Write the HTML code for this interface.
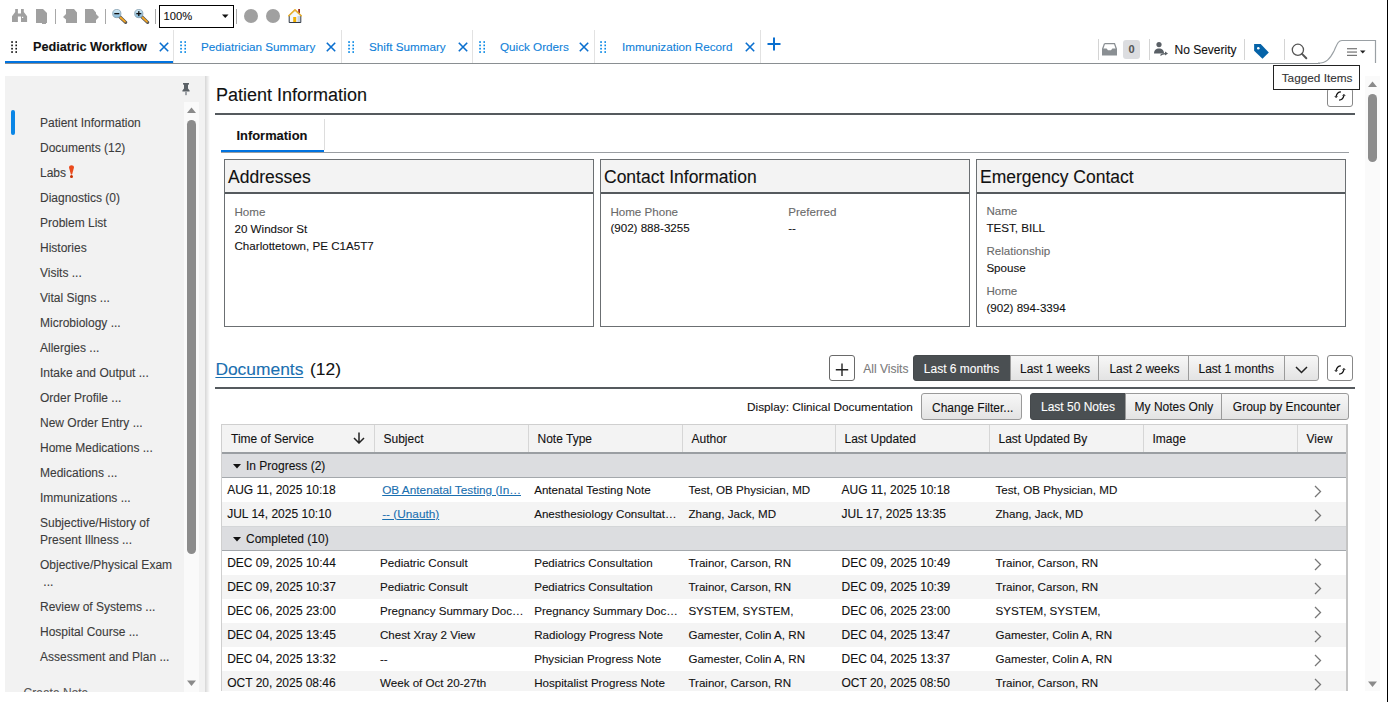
<!DOCTYPE html>
<html><head><meta charset="utf-8"><title>Pediatric Workflow</title>
<style>
html,body{margin:0;padding:0;background:#fff;}
body{width:1388px;height:702px;position:relative;overflow:hidden;font-family:"Liberation Sans",sans-serif;}
.t{position:absolute;white-space:nowrap;-webkit-text-stroke:0.1px currentColor;}
.b{position:absolute;}
</style></head><body>

<div class="b" style="left:1387px;top:0px;width:1px;height:702px;background:#000"></div>
<svg class="b" style="left:12px;top:9px;" width="16" height="14" viewBox="0 0 16 14"><path fill="#a0a0a0" d="M3.2 0H5.9V4.4H9V0H11.8V3L15.1 7.2V13H9V7.6H5.9V13H0V7.2L3.2 3Z"/><rect x="10" y="7.8" width="1.2" height="1.2" fill="#fff"/></svg>
<svg class="b" style="left:36px;top:9px;" width="11" height="16" viewBox="0 0 11 16"><path fill="#a0a0a0" d="M0 0h7l4 4v10H10v1H6v-1H0z"/></svg>
<div class="b" style="left:55px;top:9px;width:1px;height:15px;background:#a8a8a8"></div>
<svg class="b" style="left:63px;top:9px;" width="14" height="14" viewBox="0 0 14 14"><path fill="#a0a0a0" d="M3 0h8l3 3.5V14H3v-3.5L0 8l3-3z"/></svg>
<svg class="b" style="left:85px;top:9px;" width="14" height="14" viewBox="0 0 14 14"><path fill="#a0a0a0" d="M0 0h8l3 3.5v1.5l3 3-3 3V14H0z"/></svg>
<div class="b" style="left:105px;top:9px;width:1px;height:15px;background:#a8a8a8"></div>
<svg class="b" style="left:112px;top:9px;" width="16" height="15" viewBox="0 0 16 15"><defs><linearGradient id="lg112" x1="0" y1="0" x2="0" y2="1"><stop offset="0" stop-color="#d8eef8"/><stop offset="1" stop-color="#7fb6d8"/></linearGradient></defs><line x1="7.5" y1="7.5" x2="13.6" y2="13.3" stroke="#555" stroke-width="3.2" stroke-linecap="round"/><line x1="8.5" y1="8.5" x2="13" y2="12.7" stroke="#f5a623" stroke-width="1.8" stroke-linecap="round"/><circle cx="4.8" cy="4.6" r="4.1" fill="url(#lg112)" stroke="#8aa4b4" stroke-width="0.9"/><rect x="2.3" y="4" width="5" height="1.3" fill="#111"/></svg>
<svg class="b" style="left:134px;top:9px;" width="16" height="15" viewBox="0 0 16 15"><defs><linearGradient id="lg134" x1="0" y1="0" x2="0" y2="1"><stop offset="0" stop-color="#d8eef8"/><stop offset="1" stop-color="#7fb6d8"/></linearGradient></defs><line x1="7.5" y1="7.5" x2="13.6" y2="13.3" stroke="#555" stroke-width="3.2" stroke-linecap="round"/><line x1="8.5" y1="8.5" x2="13" y2="12.7" stroke="#f5a623" stroke-width="1.8" stroke-linecap="round"/><circle cx="4.8" cy="4.6" r="4.1" fill="url(#lg134)" stroke="#8aa4b4" stroke-width="0.9"/><rect x="2.3" y="4" width="5" height="1.3" fill="#111"/><rect x="4.15" y="2.1" width="1.3" height="5" fill="#111"/></svg>
<div class="b" style="left:155px;top:9px;width:1px;height:15px;background:#a8a8a8"></div>
<div class="b" style="left:159px;top:5px;width:75px;height:23px;box-sizing:border-box;border:1px solid #000;background:#fff"></div>
<div class="t " style="left:163.6px;top:10.32px;font-size:11.2px;line-height:13px;color:#111;font-weight:normal;">100%</div>
<svg class="b" style="left:222px;top:14px;" width="7" height="5" viewBox="0 0 7 5"><path d="M0 0.5h6.5L3.25 4z" fill="#111"/></svg>
<div class="b" style="left:236px;top:9px;width:1px;height:15px;background:#a8a8a8"></div>
<div class="b" style="left:244px;top:9px;width:14px;height:14px;border-radius:50%;background:#a0a0a0"></div>
<div class="b" style="left:266px;top:9px;width:14px;height:14px;border-radius:50%;background:#a0a0a0"></div>
<svg class="b" style="left:288px;top:9px;" width="14" height="14" viewBox="0 0 14 14"><rect x="10.2" y="0" width="1.8" height="4.5" fill="#9a2a20"/><path d="M1.2 6.5L7 1 12.8 6.5V13.5H1.2z" fill="#f4f7fb" stroke="#1b2430" stroke-width="0.9"/><path d="M0.3 7.2L7 0.8 13.7 7.2" fill="none" stroke="#e8b030" stroke-width="1.6"/><rect x="5.2" y="8" width="3" height="5" fill="#f0b000"/><rect x="9.5" y="7" width="2.5" height="6" fill="#c8d4e4"/></svg>
<div class="b" style="left:5px;top:63px;width:1315px;height:1px;background:#8a8f92"></div>
<svg class="b" style="left:11px;top:41px;" width="6" height="12" viewBox="0 0 6 12"><rect x="0.20" y="0.20" width="1.7" height="1.7" fill="#1a1a1a"/><rect x="4.40" y="0.20" width="1.7" height="1.7" fill="#1a1a1a"/><rect x="0.20" y="3.53" width="1.7" height="1.7" fill="#1a1a1a"/><rect x="4.40" y="3.53" width="1.7" height="1.7" fill="#1a1a1a"/><rect x="0.20" y="6.86" width="1.7" height="1.7" fill="#1a1a1a"/><rect x="4.40" y="6.86" width="1.7" height="1.7" fill="#1a1a1a"/><rect x="0.20" y="10.19" width="1.7" height="1.7" fill="#1a1a1a"/><rect x="4.40" y="10.19" width="1.7" height="1.7" fill="#1a1a1a"/></svg>
<div class="t " style="left:33px;top:39.50px;font-size:12.7px;line-height:15px;color:#111;font-weight:bold;">Pediatric Workflow</div>
<svg class="b" style="left:159px;top:42px;" width="10" height="10" viewBox="0 0 10 10"><path d="M0.8 0.8L9.2 9.2M9.2 0.8L0.8 9.2" stroke="#0a6fcf" stroke-width="1.6"/></svg>
<div class="b" style="left:5px;top:61px;width:168px;height:2px;background:#0073e0"></div>
<div class="b" style="left:173px;top:30px;width:1px;height:33px;background:#e2e2e2"></div>
<svg class="b" style="left:179.6px;top:41px;" width="6" height="12" viewBox="0 0 6 12"><rect x="0.20" y="0.20" width="1.7" height="1.7" fill="#0a8ae6"/><rect x="4.40" y="0.20" width="1.7" height="1.7" fill="#0a8ae6"/><rect x="0.20" y="3.53" width="1.7" height="1.7" fill="#0a8ae6"/><rect x="4.40" y="3.53" width="1.7" height="1.7" fill="#0a8ae6"/><rect x="0.20" y="6.86" width="1.7" height="1.7" fill="#0a8ae6"/><rect x="4.40" y="6.86" width="1.7" height="1.7" fill="#0a8ae6"/><rect x="0.20" y="10.19" width="1.7" height="1.7" fill="#0a8ae6"/><rect x="4.40" y="10.19" width="1.7" height="1.7" fill="#0a8ae6"/></svg>
<div class="t " style="left:201px;top:40.15px;font-size:11.7px;line-height:14px;color:#0f7fd9;font-weight:normal;">Pediatrician Summary</div>
<svg class="b" style="left:326px;top:42px;" width="10" height="10" viewBox="0 0 10 10"><path d="M0.8 0.8L9.2 9.2M9.2 0.8L0.8 9.2" stroke="#0a6fcf" stroke-width="1.6"/></svg>
<div class="b" style="left:341px;top:30px;width:1px;height:33px;background:#e2e2e2"></div>
<svg class="b" style="left:347.6px;top:41px;" width="6" height="12" viewBox="0 0 6 12"><rect x="0.20" y="0.20" width="1.7" height="1.7" fill="#0a8ae6"/><rect x="4.40" y="0.20" width="1.7" height="1.7" fill="#0a8ae6"/><rect x="0.20" y="3.53" width="1.7" height="1.7" fill="#0a8ae6"/><rect x="4.40" y="3.53" width="1.7" height="1.7" fill="#0a8ae6"/><rect x="0.20" y="6.86" width="1.7" height="1.7" fill="#0a8ae6"/><rect x="4.40" y="6.86" width="1.7" height="1.7" fill="#0a8ae6"/><rect x="0.20" y="10.19" width="1.7" height="1.7" fill="#0a8ae6"/><rect x="4.40" y="10.19" width="1.7" height="1.7" fill="#0a8ae6"/></svg>
<div class="t " style="left:369px;top:40.15px;font-size:11.7px;line-height:14px;color:#0f7fd9;font-weight:normal;">Shift Summary</div>
<svg class="b" style="left:458px;top:42px;" width="10" height="10" viewBox="0 0 10 10"><path d="M0.8 0.8L9.2 9.2M9.2 0.8L0.8 9.2" stroke="#0a6fcf" stroke-width="1.6"/></svg>
<div class="b" style="left:472px;top:30px;width:1px;height:33px;background:#e2e2e2"></div>
<svg class="b" style="left:478.6px;top:41px;" width="6" height="12" viewBox="0 0 6 12"><rect x="0.20" y="0.20" width="1.7" height="1.7" fill="#0a8ae6"/><rect x="4.40" y="0.20" width="1.7" height="1.7" fill="#0a8ae6"/><rect x="0.20" y="3.53" width="1.7" height="1.7" fill="#0a8ae6"/><rect x="4.40" y="3.53" width="1.7" height="1.7" fill="#0a8ae6"/><rect x="0.20" y="6.86" width="1.7" height="1.7" fill="#0a8ae6"/><rect x="4.40" y="6.86" width="1.7" height="1.7" fill="#0a8ae6"/><rect x="0.20" y="10.19" width="1.7" height="1.7" fill="#0a8ae6"/><rect x="4.40" y="10.19" width="1.7" height="1.7" fill="#0a8ae6"/></svg>
<div class="t " style="left:500px;top:40.15px;font-size:11.7px;line-height:14px;color:#0f7fd9;font-weight:normal;">Quick Orders</div>
<svg class="b" style="left:579px;top:42px;" width="10" height="10" viewBox="0 0 10 10"><path d="M0.8 0.8L9.2 9.2M9.2 0.8L0.8 9.2" stroke="#0a6fcf" stroke-width="1.6"/></svg>
<div class="b" style="left:594px;top:30px;width:1px;height:33px;background:#e2e2e2"></div>
<svg class="b" style="left:600.4px;top:41px;" width="6" height="12" viewBox="0 0 6 12"><rect x="0.20" y="0.20" width="1.7" height="1.7" fill="#0a8ae6"/><rect x="4.40" y="0.20" width="1.7" height="1.7" fill="#0a8ae6"/><rect x="0.20" y="3.53" width="1.7" height="1.7" fill="#0a8ae6"/><rect x="4.40" y="3.53" width="1.7" height="1.7" fill="#0a8ae6"/><rect x="0.20" y="6.86" width="1.7" height="1.7" fill="#0a8ae6"/><rect x="4.40" y="6.86" width="1.7" height="1.7" fill="#0a8ae6"/><rect x="0.20" y="10.19" width="1.7" height="1.7" fill="#0a8ae6"/><rect x="4.40" y="10.19" width="1.7" height="1.7" fill="#0a8ae6"/></svg>
<div class="t " style="left:622px;top:40.15px;font-size:11.7px;line-height:14px;color:#0f7fd9;font-weight:normal;">Immunization Record</div>
<svg class="b" style="left:745px;top:42px;" width="10" height="10" viewBox="0 0 10 10"><path d="M0.8 0.8L9.2 9.2M9.2 0.8L0.8 9.2" stroke="#0a6fcf" stroke-width="1.6"/></svg>
<div class="b" style="left:760px;top:30px;width:1px;height:33px;background:#e2e2e2"></div>
<svg class="b" style="left:767px;top:37px;" width="14" height="14" viewBox="0 0 14 14"><path d="M7 0.5V13.5M0.5 7H13.5" stroke="#0a6fcf" stroke-width="2"/></svg>
<div class="b" style="left:1098px;top:39px;width:1px;height:21px;background:#d4d4d4"></div>
<svg class="b" style="left:1102px;top:43px;" width="15" height="13" viewBox="0 0 15 13"><path d="M2.5 0.6h10L14.4 6" fill="none" stroke="#8a8f93" stroke-width="1.3"/><path d="M2.5 0.6L0.6 6" fill="none" stroke="#8a8f93" stroke-width="1.3"/><path d="M0 5.6h4.6l1.4 1.6h3l1.4-1.6H15V12.4H0z" fill="#8a8f93"/></svg>
<div class="b" style="left:1123px;top:40px;width:17px;height:19px;background:#dcdde0;border-radius:3px"></div>
<div class="t " style="left:1128.5px;top:43.19px;font-size:11px;line-height:13px;color:#555;font-weight:bold;">0</div>
<div class="b" style="left:1149px;top:39px;width:1px;height:21px;background:#d4d4d4"></div>
<svg class="b" style="left:1153px;top:42px;" width="16" height="15" viewBox="0 0 16 15"><circle cx="6" cy="2.6" r="2.6" fill="#5a6066"/><path d="M1 11.6C1 8 3 6.4 6 6.4s5 1.6 5 5.2z" fill="#5a6066"/><path d="M7.5 13.6c1-1.8 2.5-2 5-2" fill="none" stroke="#5a6066" stroke-width="1.1"/><path d="M12 9.6l3 2-3 2z" fill="#5a6066"/></svg>
<div class="t " style="left:1174.5px;top:42.64px;font-size:12px;line-height:14px;color:#111;font-weight:normal;">No Severity</div>
<div class="b" style="left:1244px;top:39px;width:1px;height:21px;background:#d4d4d4"></div>
<svg class="b" style="left:1253px;top:43px;" width="17" height="17" viewBox="0 0 17 17"><path d="M1.1 1.1h6.6l8.1 8.3-6.3 6.4-8.4-8.1z" fill="#0563a8"/><circle cx="5.3" cy="5.2" r="1.3" fill="#fff"/></svg>
<div class="b" style="left:1284px;top:39px;width:1px;height:21px;background:#d4d4d4"></div>
<svg class="b" style="left:1290px;top:42px;" width="18" height="18" viewBox="0 0 18 18"><circle cx="7.9" cy="7.8" r="5.6" fill="none" stroke="#555" stroke-width="1.3"/><path d="M12 11.9L16.3 16.2" stroke="#555" stroke-width="2" stroke-linecap="round"/></svg>
<svg class="b" style="left:1318px;top:39px;" width="60" height="26" viewBox="0 0 60 26"><path d="M0 24.2C8 24.2 12 20 16 12 19 5.5 20 1.5 24 1.5H57.5V24" fill="none" stroke="#9aa0a4" stroke-width="1.2"/></svg>
<svg class="b" style="left:1346px;top:47px;" width="22" height="10" viewBox="0 0 22 10"><rect x="1" y="1.2" width="10" height="1.1" fill="#666"/><rect x="1" y="4.5" width="10" height="1.1" fill="#666"/><rect x="1" y="7.8" width="10" height="1.1" fill="#666"/><path d="M14 3.6h5.5l-2.75 2.8z" fill="#222"/></svg>
<div class="b" style="left:5px;top:76px;width:200px;height:616px;background:#f2f2f2"></div>
<div class="b" style="left:205px;top:76px;width:5px;height:616px;background:linear-gradient(to right,#d6d6d6,#eeeeee 60%,#fff)"></div>
<svg class="b" style="left:182px;top:83px;" width="8" height="13" viewBox="0 0 8 13"><path d="M1 0h6v1.2L6 2v3.6l1.6 1.8V8.6H0.4V7.4L2 5.6V2L1 1.2z" fill="#5b6166"/><rect x="3.2" y="8.6" width="1.6" height="3.6" fill="#8a9096"/></svg>
<div class="b" style="left:184px;top:102px;width:15px;height:590px;background:#fafafa"></div>
<svg class="b" style="left:187px;top:107px;" width="9" height="6" viewBox="0 0 9 6"><path d="M0 6L4.5 0.5 9 6z" fill="#8a8a8a"/></svg>
<div class="b" style="left:187px;top:120px;width:9px;height:434px;background:#8c8c8c;border-radius:4.5px"></div>
<svg class="b" style="left:187px;top:680px;" width="9" height="6" viewBox="0 0 9 6"><path d="M0 0.5h9L4.5 6z" fill="#8a8a8a"/></svg>
<div class="b" style="left:11px;top:110px;width:4px;height:25px;background:#0b86e6;border-radius:2px"></div>
<div class="t " style="left:40px;top:115.84px;font-size:12px;line-height:14px;color:#3c3c3c;font-weight:normal;">Patient Information</div>
<div class="t " style="left:40px;top:140.84px;font-size:12px;line-height:14px;color:#3c3c3c;font-weight:normal;">Documents (12)</div>
<div class="t " style="left:40px;top:165.84px;font-size:12px;line-height:14px;color:#3c3c3c;font-weight:normal;">Labs</div>
<div class="t " style="left:40px;top:190.84px;font-size:12px;line-height:14px;color:#3c3c3c;font-weight:normal;">Diagnostics (0)</div>
<div class="t " style="left:40px;top:215.84px;font-size:12px;line-height:14px;color:#3c3c3c;font-weight:normal;">Problem List</div>
<div class="t " style="left:40px;top:240.84px;font-size:12px;line-height:14px;color:#3c3c3c;font-weight:normal;">Histories</div>
<div class="t " style="left:40px;top:265.84px;font-size:12px;line-height:14px;color:#3c3c3c;font-weight:normal;">Visits ...</div>
<div class="t " style="left:40px;top:290.84px;font-size:12px;line-height:14px;color:#3c3c3c;font-weight:normal;">Vital Signs ...</div>
<div class="t " style="left:40px;top:315.84px;font-size:12px;line-height:14px;color:#3c3c3c;font-weight:normal;">Microbiology ...</div>
<div class="t " style="left:40px;top:340.84px;font-size:12px;line-height:14px;color:#3c3c3c;font-weight:normal;">Allergies ...</div>
<div class="t " style="left:40px;top:365.84px;font-size:12px;line-height:14px;color:#3c3c3c;font-weight:normal;">Intake and Output ...</div>
<div class="t " style="left:40px;top:390.84px;font-size:12px;line-height:14px;color:#3c3c3c;font-weight:normal;">Order Profile ...</div>
<div class="t " style="left:40px;top:415.84px;font-size:12px;line-height:14px;color:#3c3c3c;font-weight:normal;">New Order Entry ...</div>
<div class="t " style="left:40px;top:440.84px;font-size:12px;line-height:14px;color:#3c3c3c;font-weight:normal;">Home Medications ...</div>
<div class="t " style="left:40px;top:465.84px;font-size:12px;line-height:14px;color:#3c3c3c;font-weight:normal;">Medications ...</div>
<div class="t " style="left:40px;top:490.84px;font-size:12px;line-height:14px;color:#3c3c3c;font-weight:normal;">Immunizations ...</div>
<div class="t " style="left:40px;top:515.84px;font-size:12px;line-height:14px;color:#3c3c3c;font-weight:normal;">Subjective/History of</div>
<div class="t " style="left:40px;top:532.84px;font-size:12px;line-height:14px;color:#3c3c3c;font-weight:normal;">Present Illness ...</div>
<div class="t " style="left:40px;top:557.84px;font-size:12px;line-height:14px;color:#3c3c3c;font-weight:normal;">Objective/Physical Exam</div>
<div class="t " style="left:40px;top:574.84px;font-size:12px;line-height:14px;color:#3c3c3c;font-weight:normal;">&nbsp;...</div>
<div class="t " style="left:40px;top:599.84px;font-size:12px;line-height:14px;color:#3c3c3c;font-weight:normal;">Review of Systems ...</div>
<div class="t " style="left:40px;top:624.84px;font-size:12px;line-height:14px;color:#3c3c3c;font-weight:normal;">Hospital Course ...</div>
<div class="t " style="left:40px;top:649.84px;font-size:12px;line-height:14px;color:#3c3c3c;font-weight:normal;">Assessment and Plan ...</div>
<svg class="b" style="left:68px;top:165px;" width="7" height="14" viewBox="0 0 7 14"><path d="M1 2.4C1 -0.4 6 -0.4 6 2.4L4.1 9.6H2.9z" fill="#ea4a1c"/><circle cx="3.5" cy="11.6" r="1.5" fill="#c83000"/></svg>
<div class="b" style="left:5px;top:676px;width:179px;height:16px;overflow:hidden">
<div class="t " style="left:18.6px;top:9.84px;font-size:12px;line-height:14px;color:#555;font-weight:normal;">Create Note</div>
</div>
<div class="t " style="left:216px;top:83.76px;font-size:18px;line-height:22px;color:#111;font-weight:normal;">Patient Information</div>
<div class="b" style="left:1327px;top:88px;width:26px;height:19px;box-sizing:border-box;border:1px solid #888;border-radius:3px;background:#fff"></div>
<div class="b" style="left:215px;top:113px;width:1140px;height:2px;background:#555a5e"></div>
<div class="t " style="left:236.5px;top:128.23px;font-size:12.9px;line-height:15px;color:#111;font-weight:bold;">Information</div>
<div class="b" style="left:221px;top:150px;width:103px;height:2px;background:#0073e0"></div>
<div class="b" style="left:324px;top:119px;width:1px;height:31px;background:#dddddd"></div>
<div class="b" style="left:221px;top:152px;width:1128px;height:1px;background:#9a9ea2"></div>
<div class="b" style="left:224px;top:159px;width:370px;height:168px;box-sizing:border-box;border:1px solid #6b6f72;background:#fff"></div>
<div class="b" style="left:225px;top:160px;width:368px;height:32px;background:#f3f3f3"></div>
<div class="b" style="left:225px;top:192px;width:368px;height:2px;background:#555a5e"></div>
<div class="t " style="left:228px;top:166.74px;font-size:17.5px;line-height:21px;color:#111;font-weight:normal;">Addresses</div>
<div class="b" style="left:600px;top:159px;width:370px;height:168px;box-sizing:border-box;border:1px solid #6b6f72;background:#fff"></div>
<div class="b" style="left:601px;top:160px;width:368px;height:32px;background:#f3f3f3"></div>
<div class="b" style="left:601px;top:192px;width:368px;height:2px;background:#555a5e"></div>
<div class="t " style="left:604px;top:166.74px;font-size:17.5px;line-height:21px;color:#111;font-weight:normal;">Contact Information</div>
<div class="b" style="left:976px;top:159px;width:370px;height:168px;box-sizing:border-box;border:1px solid #6b6f72;background:#fff"></div>
<div class="b" style="left:977px;top:160px;width:368px;height:32px;background:#f3f3f3"></div>
<div class="b" style="left:977px;top:192px;width:368px;height:2px;background:#555a5e"></div>
<div class="t " style="left:980px;top:166.74px;font-size:17.5px;line-height:21px;color:#111;font-weight:normal;">Emergency Contact</div>
<div class="t " style="left:234.5px;top:204.78px;font-size:11.6px;line-height:14px;color:#6a6a6a;font-weight:normal;">Home</div>
<div class="t " style="left:234.5px;top:221.78px;font-size:11.6px;line-height:14px;color:#111;font-weight:normal;">20 Windsor St</div>
<div class="t " style="left:234.5px;top:238.58px;font-size:11.6px;line-height:14px;color:#111;font-weight:normal;">Charlottetown, PE C1A5T7</div>
<div class="t " style="left:610.4px;top:204.68px;font-size:11.6px;line-height:14px;color:#6a6a6a;font-weight:normal;">Home Phone</div>
<div class="t " style="left:610.4px;top:221.28px;font-size:11.6px;line-height:14px;color:#111;font-weight:normal;">(902) 888-3255</div>
<div class="t " style="left:788.2px;top:204.68px;font-size:11.6px;line-height:14px;color:#6a6a6a;font-weight:normal;">Preferred</div>
<div class="t " style="left:788.2px;top:221.28px;font-size:11.6px;line-height:14px;color:#111;font-weight:normal;">--</div>
<div class="t " style="left:986.4px;top:204.38px;font-size:11.6px;line-height:14px;color:#6a6a6a;font-weight:normal;">Name</div>
<div class="t " style="left:986.4px;top:221.38px;font-size:11.6px;line-height:14px;color:#111;font-weight:normal;">TEST, BILL</div>
<div class="t " style="left:986.4px;top:244.28px;font-size:11.6px;line-height:14px;color:#6a6a6a;font-weight:normal;">Relationship</div>
<div class="t " style="left:986.4px;top:260.98px;font-size:11.6px;line-height:14px;color:#111;font-weight:normal;">Spouse</div>
<div class="t " style="left:986.4px;top:284.48px;font-size:11.6px;line-height:14px;color:#6a6a6a;font-weight:normal;">Home</div>
<div class="t " style="left:986.4px;top:300.78px;font-size:11.6px;line-height:14px;color:#111;font-weight:normal;">(902) 894-3394</div>
<div class="t " style="left:215.4px;top:359.17px;font-size:17.4px;line-height:21px;color:#1a6fb0;font-weight:normal;text-decoration:underline;text-underline-offset:2px;text-decoration-thickness:1px">Documents</div>
<div class="t " style="left:310px;top:359.17px;font-size:17.4px;line-height:21px;color:#111;font-weight:normal;">(12)</div>
<div class="b" style="left:215px;top:387px;width:1140px;height:2px;background:#555a5e"></div>
<div class="b" style="left:829px;top:355px;width:26px;height:26px;box-sizing:border-box;border:1px solid #6a6a6a;border-radius:3px;background:#fff"></div>
<svg class="b" style="left:835px;top:362px;" width="14" height="14" viewBox="0 0 14 14"><path d="M7 1.5V14M0.8 7.8H13.2" stroke="#222" stroke-width="1.4"/></svg>
<div class="t " style="left:863.3px;top:362.34px;font-size:12px;line-height:14px;color:#7a7a7a;font-weight:normal;">All Visits</div>
<div class="b" style="left:913px;top:355px;width:98px;height:26px;box-sizing:border-box;background:#4a4f52;border:1px solid #45494c;border-radius:3px 0 0 3px"></div>
<div class="t " style="left:923.8px;top:362.34px;font-size:12px;line-height:14px;color:#fff;font-weight:normal;">Last 6 months</div>
<div class="b" style="left:1010px;top:355px;width:89px;height:26px;box-sizing:border-box;border:1px solid #9a9a9a;background:linear-gradient(#f7f7f7,#e3e3e3);"></div>
<div class="t " style="left:1020px;top:362.34px;font-size:12px;line-height:14px;color:#111;font-weight:normal;">Last 1 weeks</div>
<div class="b" style="left:1098px;top:355px;width:91px;height:26px;box-sizing:border-box;border:1px solid #9a9a9a;background:linear-gradient(#f7f7f7,#e3e3e3);"></div>
<div class="t " style="left:1109.4px;top:362.34px;font-size:12px;line-height:14px;color:#111;font-weight:normal;">Last 2 weeks</div>
<div class="b" style="left:1188px;top:355px;width:97px;height:26px;box-sizing:border-box;border:1px solid #9a9a9a;background:linear-gradient(#f7f7f7,#e3e3e3);"></div>
<div class="t " style="left:1198.5px;top:362.34px;font-size:12px;line-height:14px;color:#111;font-weight:normal;">Last 1 months</div>
<div class="b" style="left:1284px;top:355px;width:35px;height:26px;box-sizing:border-box;border:1px solid #9a9a9a;background:linear-gradient(#f7f7f7,#e3e3e3);border-radius:0 3px 3px 0"></div>
<svg class="b" style="left:1295px;top:366px;" width="13" height="8" viewBox="0 0 13 8"><path d="M1 1L6.5 6.5 12 1" fill="none" stroke="#222" stroke-width="1.5"/></svg>
<div class="b" style="left:1327px;top:355px;width:26px;height:26px;box-sizing:border-box;border:1px solid #888;border-radius:3px;background:#fff"></div>
<svg class="b" style="left:1333px;top:363px;" width="14" height="14" viewBox="0 0 14 14"><path d="M7.9 2.9C5.6 3 3.8 4.6 3.2 7.1" fill="none" stroke="#111" stroke-width="1.3"/><path d="M6.1 11.1C8.4 11 10.2 9.4 10.8 6.9" fill="none" stroke="#111" stroke-width="1.3"/><path d="M1.2 7.2L5 7.2 3.1 8.9z" fill="#111"/><path d="M9 6.8L12.8 6.8 10.9 5.1z" fill="#111"/></svg>
<svg class="b" style="left:1333px;top:89px;" width="14" height="14" viewBox="0 0 14 14"><path d="M7.9 2.9C5.6 3 3.8 4.6 3.2 7.1" fill="none" stroke="#111" stroke-width="1.3"/><path d="M6.1 11.1C8.4 11 10.2 9.4 10.8 6.9" fill="none" stroke="#111" stroke-width="1.3"/><path d="M1.2 7.2L5 7.2 3.1 8.9z" fill="#111"/><path d="M9 6.8L12.8 6.8 10.9 5.1z" fill="#111"/></svg>
<div class="t " style="left:747px;top:399.91px;font-size:11.8px;line-height:14px;color:#111;font-weight:normal;">Display: Clinical Documentation</div>
<div class="b" style="left:921px;top:393px;width:101px;height:27px;box-sizing:border-box;border:1px solid #9a9a9a;background:linear-gradient(#f7f7f7,#e3e3e3);border-radius:3px"></div>
<div class="t " style="left:932px;top:400.84px;font-size:12px;line-height:14px;color:#111;font-weight:normal;">Change Filter...</div>
<div class="b" style="left:1030px;top:393px;width:96px;height:27px;box-sizing:border-box;background:#4a4f52;border:1px solid #45494c;border-radius:3px 0 0 3px"></div>
<div class="t " style="left:1041px;top:400.34px;font-size:12px;line-height:14px;color:#fff;font-weight:normal;">Last 50 Notes</div>
<div class="b" style="left:1125px;top:393px;width:97px;height:27px;box-sizing:border-box;border:1px solid #9a9a9a;background:linear-gradient(#f7f7f7,#e3e3e3);"></div>
<div class="t " style="left:1134.6px;top:400.34px;font-size:12px;line-height:14px;color:#111;font-weight:normal;">My Notes Only</div>
<div class="b" style="left:1221px;top:393px;width:128px;height:27px;box-sizing:border-box;border:1px solid #9a9a9a;background:linear-gradient(#f7f7f7,#e3e3e3);border-radius:0 3px 3px 0"></div>
<div class="t " style="left:1232.8px;top:400.34px;font-size:12px;line-height:14px;color:#111;font-weight:normal;">Group by Encounter</div>
<div class="b" style="left:221px;top:424px;width:1127px;height:1px;background:#cfcfcf"></div>
<div class="b" style="left:221px;top:424px;width:1px;height:268px;background:#cfcfcf"></div>
<div class="b" style="left:1346px;top:424px;width:2px;height:268px;background:#c4c4c4"></div>
<div class="b" style="left:222px;top:425px;width:1124px;height:27px;background:#f3f3f3"></div>
<div class="b" style="left:222px;top:452px;width:1124px;height:2px;background:#9a9ea2"></div>
<div class="b" style="left:374px;top:425px;width:1px;height:27px;background:#d6d6d6"></div>
<div class="b" style="left:528px;top:425px;width:1px;height:27px;background:#d6d6d6"></div>
<div class="b" style="left:682px;top:425px;width:1px;height:27px;background:#d6d6d6"></div>
<div class="b" style="left:835px;top:425px;width:1px;height:27px;background:#d6d6d6"></div>
<div class="b" style="left:989px;top:425px;width:1px;height:27px;background:#d6d6d6"></div>
<div class="b" style="left:1143px;top:425px;width:1px;height:27px;background:#d6d6d6"></div>
<div class="b" style="left:1297px;top:425px;width:1px;height:27px;background:#d6d6d6"></div>
<div class="t " style="left:231px;top:431.84px;font-size:12px;line-height:14px;color:#111;font-weight:normal;">Time of Service</div>
<div class="t " style="left:383.5px;top:431.84px;font-size:12px;line-height:14px;color:#111;font-weight:normal;">Subject</div>
<div class="t " style="left:537.5px;top:431.84px;font-size:12px;line-height:14px;color:#111;font-weight:normal;">Note Type</div>
<div class="t " style="left:691.5px;top:431.84px;font-size:12px;line-height:14px;color:#111;font-weight:normal;">Author</div>
<div class="t " style="left:844.5px;top:431.84px;font-size:12px;line-height:14px;color:#111;font-weight:normal;">Last Updated</div>
<div class="t " style="left:998.5px;top:431.84px;font-size:12px;line-height:14px;color:#111;font-weight:normal;">Last Updated By</div>
<div class="t " style="left:1152.5px;top:431.84px;font-size:12px;line-height:14px;color:#111;font-weight:normal;">Image</div>
<div class="t " style="left:1306.5px;top:431.84px;font-size:12px;line-height:14px;color:#111;font-weight:normal;">View</div>
<svg class="b" style="left:353px;top:432px;" width="12" height="12" viewBox="0 0 12 12"><path d="M6 0.5V11M1 6L6 11 11 6" fill="none" stroke="#222" stroke-width="1.5"/></svg>
<div class="b" style="left:222px;top:454px;width:1124px;height:23px;background:#dcdde0"></div>
<div class="b" style="left:222px;top:477px;width:1124px;height:1px;background:#a4a8ac"></div>
<svg class="b" style="left:233px;top:464px;" width="8" height="5" viewBox="0 0 8 5"><path d="M0 0h8L4 4.5z" fill="#111"/></svg>
<div class="t " style="left:246px;top:458.54px;font-size:12px;line-height:14px;color:#111;font-weight:normal;">In Progress (2)</div>
<div class="b" style="left:222px;top:478px;width:1124px;height:24px;background:#fff"></div>
<div class="t " style="left:227.2px;top:482.64px;font-size:12px;line-height:14px;color:#111;font-weight:normal;">AUG 11, 2025 10:18</div>
<div class="t " style="left:382.2px;top:482.71px;font-size:11.8px;line-height:14px;color:#1a6fb0;font-weight:normal;text-decoration:underline;text-decoration-thickness:1px">OB Antenatal Testing (In…</div>
<div class="t " style="left:534.2px;top:482.78px;font-size:11.6px;line-height:14px;color:#111;font-weight:normal;">Antenatal Testing Note</div>
<div class="t " style="left:688.4px;top:482.78px;font-size:11.6px;line-height:14px;color:#111;font-weight:normal;">Test, OB Physician, MD</div>
<div class="t " style="left:841.5px;top:482.64px;font-size:12px;line-height:14px;color:#111;font-weight:normal;">AUG 11, 2025 10:18</div>
<div class="t " style="left:995.5px;top:482.78px;font-size:11.6px;line-height:14px;color:#111;font-weight:normal;">Test, OB Physician, MD</div>
<svg class="b" style="left:1314px;top:485px;" width="8" height="13" viewBox="0 0 8 13"><path d="M1 1L6.5 6.5 1 12" fill="none" stroke="#777" stroke-width="1.3"/></svg>
<div class="b" style="left:222px;top:502px;width:1124px;height:24px;background:#f4f4f4"></div>
<div class="t " style="left:227.2px;top:506.64px;font-size:12px;line-height:14px;color:#111;font-weight:normal;">JUL 14, 2025 10:10</div>
<div class="t " style="left:382.2px;top:506.71px;font-size:11.8px;line-height:14px;color:#1a6fb0;font-weight:normal;text-decoration:underline;text-decoration-thickness:1px">-- (Unauth)</div>
<div class="t " style="left:534.2px;top:506.78px;font-size:11.6px;line-height:14px;color:#111;font-weight:normal;">Anesthesiology Consultat…</div>
<div class="t " style="left:688.4px;top:506.78px;font-size:11.6px;line-height:14px;color:#111;font-weight:normal;">Zhang, Jack, MD</div>
<div class="t " style="left:841.5px;top:506.64px;font-size:12px;line-height:14px;color:#111;font-weight:normal;">JUL 17, 2025 13:35</div>
<div class="t " style="left:995.5px;top:506.78px;font-size:11.6px;line-height:14px;color:#111;font-weight:normal;">Zhang, Jack, MD</div>
<svg class="b" style="left:1314px;top:509px;" width="8" height="13" viewBox="0 0 8 13"><path d="M1 1L6.5 6.5 1 12" fill="none" stroke="#777" stroke-width="1.3"/></svg>
<div class="b" style="left:222px;top:526px;width:1124px;height:1px;background:#d4d6d8"></div>
<div class="b" style="left:222px;top:527px;width:1124px;height:23px;background:#dcdde0"></div>
<div class="b" style="left:222px;top:550px;width:1124px;height:1px;background:#a4a8ac"></div>
<svg class="b" style="left:233px;top:537px;" width="8" height="5" viewBox="0 0 8 5"><path d="M0 0h8L4 4.5z" fill="#111"/></svg>
<div class="t " style="left:246px;top:531.54px;font-size:12px;line-height:14px;color:#111;font-weight:normal;">Completed (10)</div>
<div class="b" style="left:222px;top:551px;width:1124px;height:24px;background:#fff"></div>
<div class="t " style="left:227.2px;top:555.64px;font-size:12px;line-height:14px;color:#111;font-weight:normal;">DEC 09, 2025 10:44</div>
<div class="t " style="left:380px;top:555.78px;font-size:11.6px;line-height:14px;color:#111;font-weight:normal;">Pediatric Consult</div>
<div class="t " style="left:534.2px;top:555.78px;font-size:11.6px;line-height:14px;color:#111;font-weight:normal;">Pediatrics Consultation</div>
<div class="t " style="left:688.4px;top:555.78px;font-size:11.6px;line-height:14px;color:#111;font-weight:normal;">Trainor, Carson, RN</div>
<div class="t " style="left:841.5px;top:555.64px;font-size:12px;line-height:14px;color:#111;font-weight:normal;">DEC 09, 2025 10:49</div>
<div class="t " style="left:995.5px;top:555.78px;font-size:11.6px;line-height:14px;color:#111;font-weight:normal;">Trainor, Carson, RN</div>
<svg class="b" style="left:1314px;top:558px;" width="8" height="13" viewBox="0 0 8 13"><path d="M1 1L6.5 6.5 1 12" fill="none" stroke="#777" stroke-width="1.3"/></svg>
<div class="b" style="left:222px;top:575px;width:1124px;height:24px;background:#f4f4f4"></div>
<div class="t " style="left:227.2px;top:579.64px;font-size:12px;line-height:14px;color:#111;font-weight:normal;">DEC 09, 2025 10:37</div>
<div class="t " style="left:380px;top:579.78px;font-size:11.6px;line-height:14px;color:#111;font-weight:normal;">Pediatric Consult</div>
<div class="t " style="left:534.2px;top:579.78px;font-size:11.6px;line-height:14px;color:#111;font-weight:normal;">Pediatrics Consultation</div>
<div class="t " style="left:688.4px;top:579.78px;font-size:11.6px;line-height:14px;color:#111;font-weight:normal;">Trainor, Carson, RN</div>
<div class="t " style="left:841.5px;top:579.64px;font-size:12px;line-height:14px;color:#111;font-weight:normal;">DEC 09, 2025 10:39</div>
<div class="t " style="left:995.5px;top:579.78px;font-size:11.6px;line-height:14px;color:#111;font-weight:normal;">Trainor, Carson, RN</div>
<svg class="b" style="left:1314px;top:582px;" width="8" height="13" viewBox="0 0 8 13"><path d="M1 1L6.5 6.5 1 12" fill="none" stroke="#777" stroke-width="1.3"/></svg>
<div class="b" style="left:222px;top:599px;width:1124px;height:24px;background:#fff"></div>
<div class="t " style="left:227.2px;top:603.64px;font-size:12px;line-height:14px;color:#111;font-weight:normal;">DEC 06, 2025 23:00</div>
<div class="t " style="left:380px;top:603.78px;font-size:11.6px;line-height:14px;color:#111;font-weight:normal;">Pregnancy Summary Doc…</div>
<div class="t " style="left:534.2px;top:603.78px;font-size:11.6px;line-height:14px;color:#111;font-weight:normal;">Pregnancy Summary Doc…</div>
<div class="t " style="left:688.4px;top:603.78px;font-size:11.6px;line-height:14px;color:#111;font-weight:normal;">SYSTEM, SYSTEM,</div>
<div class="t " style="left:841.5px;top:603.64px;font-size:12px;line-height:14px;color:#111;font-weight:normal;">DEC 06, 2025 23:00</div>
<div class="t " style="left:995.5px;top:603.78px;font-size:11.6px;line-height:14px;color:#111;font-weight:normal;">SYSTEM, SYSTEM,</div>
<svg class="b" style="left:1314px;top:606px;" width="8" height="13" viewBox="0 0 8 13"><path d="M1 1L6.5 6.5 1 12" fill="none" stroke="#777" stroke-width="1.3"/></svg>
<div class="b" style="left:222px;top:623px;width:1124px;height:24px;background:#f4f4f4"></div>
<div class="t " style="left:227.2px;top:627.64px;font-size:12px;line-height:14px;color:#111;font-weight:normal;">DEC 04, 2025 13:45</div>
<div class="t " style="left:380px;top:627.78px;font-size:11.6px;line-height:14px;color:#111;font-weight:normal;">Chest Xray 2 View</div>
<div class="t " style="left:534.2px;top:627.78px;font-size:11.6px;line-height:14px;color:#111;font-weight:normal;">Radiology Progress Note</div>
<div class="t " style="left:688.4px;top:627.78px;font-size:11.6px;line-height:14px;color:#111;font-weight:normal;">Gamester, Colin A, RN</div>
<div class="t " style="left:841.5px;top:627.64px;font-size:12px;line-height:14px;color:#111;font-weight:normal;">DEC 04, 2025 13:47</div>
<div class="t " style="left:995.5px;top:627.78px;font-size:11.6px;line-height:14px;color:#111;font-weight:normal;">Gamester, Colin A, RN</div>
<svg class="b" style="left:1314px;top:630px;" width="8" height="13" viewBox="0 0 8 13"><path d="M1 1L6.5 6.5 1 12" fill="none" stroke="#777" stroke-width="1.3"/></svg>
<div class="b" style="left:222px;top:647px;width:1124px;height:24px;background:#fff"></div>
<div class="t " style="left:227.2px;top:651.64px;font-size:12px;line-height:14px;color:#111;font-weight:normal;">DEC 04, 2025 13:32</div>
<div class="t " style="left:380px;top:651.78px;font-size:11.6px;line-height:14px;color:#111;font-weight:normal;">--</div>
<div class="t " style="left:534.2px;top:651.78px;font-size:11.6px;line-height:14px;color:#111;font-weight:normal;">Physician Progress Note</div>
<div class="t " style="left:688.4px;top:651.78px;font-size:11.6px;line-height:14px;color:#111;font-weight:normal;">Gamester, Colin A, RN</div>
<div class="t " style="left:841.5px;top:651.64px;font-size:12px;line-height:14px;color:#111;font-weight:normal;">DEC 04, 2025 13:37</div>
<div class="t " style="left:995.5px;top:651.78px;font-size:11.6px;line-height:14px;color:#111;font-weight:normal;">Gamester, Colin A, RN</div>
<svg class="b" style="left:1314px;top:654px;" width="8" height="13" viewBox="0 0 8 13"><path d="M1 1L6.5 6.5 1 12" fill="none" stroke="#777" stroke-width="1.3"/></svg>
<div class="b" style="left:222px;top:671px;width:1124px;height:24px;background:#f4f4f4"></div>
<div class="t " style="left:227.2px;top:675.64px;font-size:12px;line-height:14px;color:#111;font-weight:normal;">OCT 20, 2025 08:46</div>
<div class="t " style="left:380px;top:675.78px;font-size:11.6px;line-height:14px;color:#111;font-weight:normal;">Week of Oct 20-27th</div>
<div class="t " style="left:534.2px;top:675.78px;font-size:11.6px;line-height:14px;color:#111;font-weight:normal;">Hospitalist Progress Note</div>
<div class="t " style="left:688.4px;top:675.78px;font-size:11.6px;line-height:14px;color:#111;font-weight:normal;">Trainor, Carson, RN</div>
<div class="t " style="left:841.5px;top:675.64px;font-size:12px;line-height:14px;color:#111;font-weight:normal;">OCT 20, 2025 08:50</div>
<div class="t " style="left:995.5px;top:675.78px;font-size:11.6px;line-height:14px;color:#111;font-weight:normal;">Trainor, Carson, RN</div>
<svg class="b" style="left:1314px;top:678px;" width="8" height="13" viewBox="0 0 8 13"><path d="M1 1L6.5 6.5 1 12" fill="none" stroke="#777" stroke-width="1.3"/></svg>
<div class="b" style="left:210px;top:691px;width:1177px;height:11px;background:#fff"></div>
<div class="b" style="left:1365px;top:76px;width:15px;height:615px;background:#fafafa"></div>
<svg class="b" style="left:1368px;top:81px;" width="9" height="6" viewBox="0 0 9 6"><path d="M0 6L4.5 0.5 9 6z" fill="#8a8a8a"/></svg>
<div class="b" style="left:1368px;top:94px;width:9px;height:68px;background:#8c8c8c;border-radius:4.5px"></div>
<svg class="b" style="left:1368px;top:681px;" width="9" height="6" viewBox="0 0 9 6"><path d="M0 0.5h9L4.5 6z" fill="#8a8a8a"/></svg>
<div class="b" style="left:1273px;top:65px;width:87px;height:25px;box-sizing:border-box;border:1px solid #222;background:#fff"></div>
<div class="t " style="left:1281.7px;top:71.31px;font-size:11.8px;line-height:14px;color:#333;font-weight:normal;">Tagged Items</div>
</body></html>
